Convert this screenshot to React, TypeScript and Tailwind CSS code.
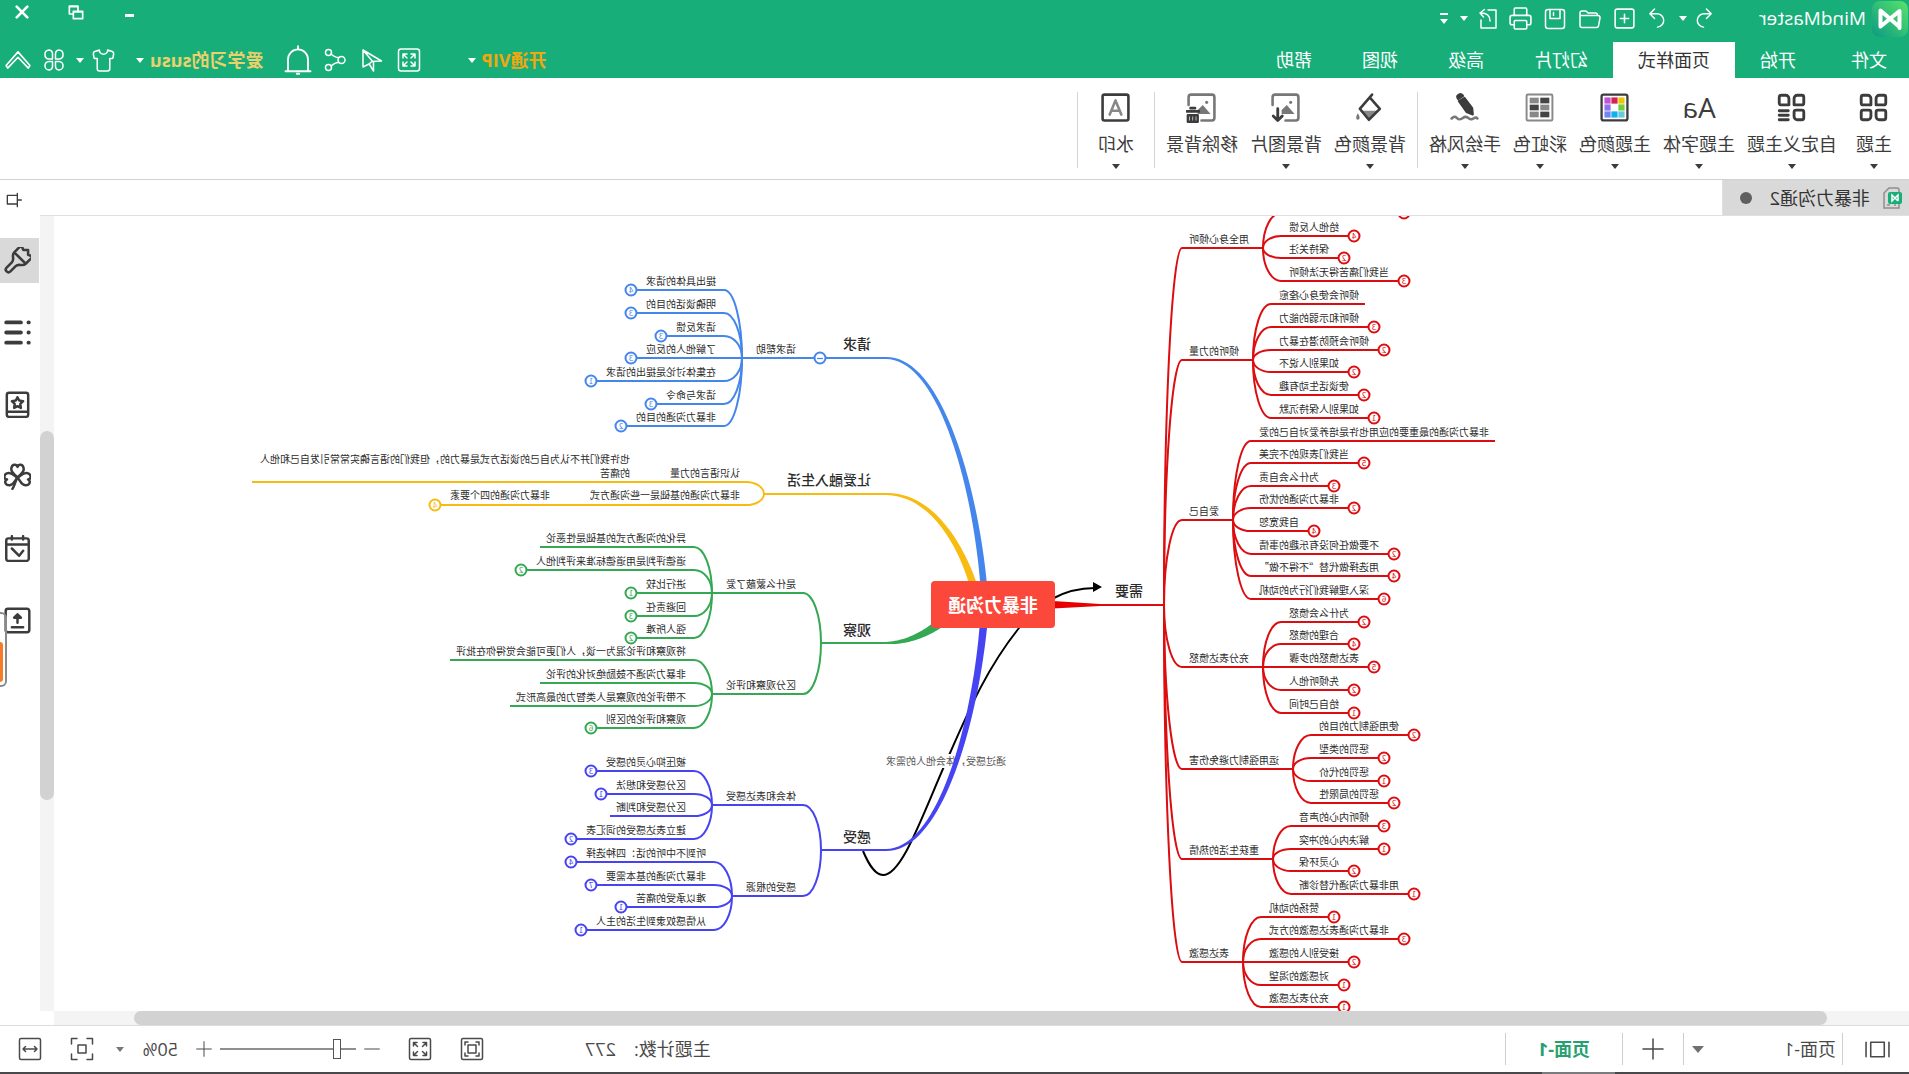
import React from 'react';
import { Printer, Shirt } from 'lucide-react';

type Leaf = [text: string, y: number, badge?: number | string];

interface Topic {
  text: string;
  y: number;
  leaves: Leaf[];
}

const RED = '#dc0d10';
const BLUE = '#4486ec';
const YELLOW = '#f7bb12';
const GREEN = '#35a853';
const PURPLE = '#4644f2';

const needTopics: Topic[] = [
  {
    text: '用全身心倾听',
    y: 248,
    leaves: [
      // scrolled out above the canvas, only its curve and marker reach in
      ['　　　　　　　　　　', 213, ' '],
      ['给他人反馈', 236, 4],
      ['保持关注', 258, 2],
      ['当我们痛苦得无法倾听', 281, 3],
    ],
  },
  {
    text: '倾听的力量',
    y: 360,
    leaves: [
      ['倾听会使身心痊愈', 304],
      ['倾听和示弱的能力', 327, 3],
      ['倾听会预防潜在暴力', 350, 2],
      ['如果别人说不', 372, 2],
      ['使谈话生动有趣', 395, 2],
      ['如果别人保持沉默', 418, 1],
    ],
  },
  {
    text: '爱自己',
    y: 520,
    leaves: [
      ['非暴力沟通的最重要的应用也许是培养爱对自己的爱', 441],
      ['当我们表现的不完美', 463, 5],
      ['为什么会自责', 486, 3],
      ['非暴力沟通的忧伤', 508, 2],
      ['自我宽恕', 531, 4],
      ['不要做任何没有乐趣的事情', 554, 2],
      ['用选择做代替“不得不做”', 576, 4],
      ['深入理解我们行为的动机', 599, 6],
    ],
  },
  {
    text: '充分表达愤怒',
    y: 667,
    leaves: [
      ['为什么会愤怒', 622, 2],
      ['合理的愤怒', 644, 4],
      ['表达愤怒的步骤', 667, 5],
      ['先倾听他人', 690, 2],
      ['给自己时间', 713, 1],
    ],
  },
  {
    text: '运用强制力避免伤害',
    y: 769,
    leaves: [
      ['使用强制力的目的', 735, 2],
      ['惩罚的类型', 758, 2],
      ['惩罚的代价', 781, 1],
      ['惩罚的局限性', 803, 2],
    ],
  },
  {
    text: '重获生活的热情',
    y: 859,
    leaves: [
      ['倾听内心的声音', 826, 3],
      ['解决内心的冲突', 849, 1],
      ['心灵环保', 871, 2],
      ['用非暴力沟通代替诊断', 894, 1],
    ],
  },
  {
    text: '表达感激',
    y: 962,
    leaves: [
      ['赞扬的动机', 917, 1],
      ['非暴力沟通表达感激的方式', 939, 3],
      ['接受别人的感激', 962, 2],
      ['对感激的渴望', 985, 1],
      ['充分表达感激', 1007, 1],
    ],
  },
];

const requestTopics: Topic[] = [
  {
    text: '请求帮助',
    y: 358,
    leaves: [
      ['提出具体的请求', 290, 4],
      ['明确谈话的目的', 313, 3],
      ['请求反馈', 336, 3],
      ['了解他人的反应', 358, 3],
      ['在集体讨论是提出的请求', 381, 1],
      ['请求与命令', 404, 3],
      ['非暴力沟通的目的', 426, 2],
    ],
  },
];

const observeTopics: Topic[] = [
  {
    text: '是什么蒙蔽了爱',
    y: 593,
    leaves: [
      ['异化的沟通方式的基础是性恶论', 547],
      ['道德评判是用道德标准来评判他人', 570, 2],
      ['进行比较', 593, 1],
      ['回避责任', 616, 3],
      ['强人所难', 638, 2],
    ],
  },
  {
    text: '区分观察和评论',
    y: 694,
    leaves: [
      ['将观察和评论混为一谈，人们更可能会觉得你在批评', 660],
      ['非暴力沟通不鼓励绝对化的评论', 683],
      ['不带评论的观察是人类智力的最高形式', 706],
      ['观察和评论的区别', 728, 6],
    ],
  },
];

const feelingTopics: Topic[] = [
  {
    text: '体会和表达感受',
    y: 805,
    leaves: [
      ['被压抑心灵的感受', 771, 3],
      ['区分感受和想法', 794, 1],
      ['区分感受和判断', 816],
      ['建立表达感受的词汇表', 839, 2],
    ],
  },
  {
    text: '感受的根源',
    y: 896,
    leaves: [
      ['听到不中听的话：四种选择', 862, 4],
      ['非暴力沟通的基本需要', 885, 7],
      ['难以承受的痛苦', 907, 1],
      ['从情感奴隶到生活的主人', 930, 1],
    ],
  },
];

// quarter ellipse from the parent joint to the start of the child's line
const bend = (x: number, y: number, dir: number, toY: number) => {
  if (toY === y) return `M${x} ${y}h${18 * dir}`;
  const sweep = (toY > y) === (dir > 0) ? 0 : 1;
  return `M${x} ${y}A18 ${Math.abs(toY - y)} 0 0 ${sweep} ${x + 18 * dir} ${toY}`;
};

// cubic curve whose stroke gets thinner towards its end
const taper = (p: number[], from: number, to: number) => {
  const left: string[] = [];
  const right: string[] = [];
  for (let i = 0; i <= 40; i++) {
    const t = i / 40;
    const m = 1 - t;
    const at = (k: number) =>
      m * m * m * p[k] + 3 * m * m * t * p[k + 2] + 3 * m * t * t * p[k + 4] + t * t * t * p[k + 6];
    const slope = (k: number) =>
      m * m * (p[k + 2] - p[k]) + 2 * m * t * (p[k + 4] - p[k + 2]) + t * t * (p[k + 6] - p[k + 4]);
    const dx = slope(0);
    const dy = slope(1);
    const len = Math.hypot(dx, dy) || 1;
    const w = (from + (to - from) * t) / 2;
    left.push(`${at(0) - (dy / len) * w} ${at(1) + (dx / len) * w}`);
    right.unshift(`${at(0) + (dy / len) * w} ${at(1) - (dx / len) * w}`);
  }
  return `M${left.concat(right).join('L')}Z`;
};

const Badge: React.FC<{ x: number; y: number; color: string; value: React.ReactNode }> = ({ x, y, color, value }) => (
  <g>
    <circle cx={x} cy={y} r={5.5} fill="#fff" stroke={color} strokeWidth={2} />
    <text x={x} y={y + 3} textAnchor="middle" fontSize={8} fill={color}>
      {value}
    </text>
  </g>
);

interface BranchProps {
  x: number;
  y: number;
  dir: 1 | -1;
  color: string;
  topics: Topic[];
}

const Branch: React.FC<BranchProps> = ({ x, y, dir, color, topics }) => {
  const anchor = dir > 0 ? 'start' : 'end';
  return (
    <>
      {topics.map((topic) => {
        const joint = x + dir * (25 + topic.text.length * 10 + 14);
        return (
          <g key={topic.text}>
            <path
              d={`${bend(x, y, dir, topic.y)}H${joint}`}
              fill="none"
              stroke={color}
              strokeWidth={2}
            />
            <text x={x + dir * 25} y={topic.y - 5} textAnchor={anchor}>
              {topic.text}
            </text>
            {topic.leaves.map(([text, leafY, badge]) => {
              const end = joint + dir * (26 + text.length * 10);
              return (
                <g key={leafY}>
                  <path
                    d={`${bend(joint, topic.y, dir, leafY)}H${end + dir * (badge ? 9 : 6)}`}
                    fill="none"
                    stroke={color}
                    strokeWidth={2}
                  />
                  <text x={joint + dir * 26} y={leafY - 5} textAnchor={anchor}>
                    {text.trim()}
                  </text>
                  {badge && <Badge x={end + dir * 15} y={leafY} color={color} value={badge} />}
                </g>
              );
            })}
          </g>
        );
      })}
    </>
  );
};

const MindMap = () => (
  <svg
    className="absolute inset-0 h-full w-full font-['Noto_Sans_CJK_SC',sans-serif]"
    fontSize={10}
    fill="#2b2b2b"
  >
    <g transform="translate(0 -216)">
      <Branch x={745} y={605} dir={-1} color={RED} topics={needTopics} />
      <path d="M745 605H812" stroke={RED} strokeWidth={2} />
      <path d="M809 604L856 601V608.5L809 606Z" fill="#e60000" />

      <path
        d="M1046 851C1040 865 1034 875 1026 875C1006 875 985 810 959 753C940 710 922 668 890 628C872 604 846 588 814 588"
        fill="none"
        stroke="#000"
        strokeWidth={2}
      />
      <path d="M807 587L816 582V592Z" fill="#000" />
      <rect x={903} y={754} width={120} height={14} fill="#fff" />
      <text x={903} y={765} fill="#555">
        通过感受，体会他人的需求
      </text>

      <path d={taper([924, 604, 929, 508, 964, 358, 1023, 358], 7, 2)} fill={BLUE} />
      <path d={taper([931, 604, 937, 570, 967, 494, 1023, 494], 8.5, 2)} fill={YELLOW} />
      <path d={taper([949, 604, 964, 622, 991, 643, 1023, 643], 13, 2)} fill={GREEN} />
      <path d={taper([924, 604, 929, 700, 964, 850, 1023, 850], 8, 2)} fill={PURPLE} />

      <path d="M1022 358H1090" stroke={BLUE} strokeWidth={2} />
      <Branch x={1088} y={358} dir={1} color={BLUE} topics={requestTopics} />
      <circle cx={1089} cy={358} r={5.5} fill="#fff" stroke={BLUE} strokeWidth={2} />
      <path d="M1086 358.5h6" stroke={BLUE} strokeWidth={1.2} />

      <g fill="none" stroke={YELLOW} strokeWidth={2}>
        <path d="M1022 494H1145" />
        <path d={`${bend(1145, 494, 1, 482)}H1657`} />
        <path d={`${bend(1145, 494, 1, 505)}H1469`} />
      </g>
      <text x={1169} y={477}>认识语言的力量</text>
      <text x={1279} y={463}>也许我们并不认为自己的谈话方式是暴力的，但我们的语言确实常常引发自己和他人</text>
      <text x={1279} y={477}>的痛苦</text>
      <text x={1169} y={499}>非暴力沟通的基础是一些沟通方式</text>
      <text x={1359} y={499}>非暴力沟通的四个要素</text>
      <Badge x={1474} y={505} color={YELLOW} value={4} />

      <path d="M1022 643H1089" stroke={GREEN} strokeWidth={2} />
      <Branch x={1088} y={643} dir={1} color={GREEN} topics={observeTopics} />

      <path d="M1022 850H1089" stroke={PURPLE} strokeWidth={2} />
      <Branch x={1088} y={850} dir={1} color={PURPLE} topics={feelingTopics} />

      <g fontSize={14} fontWeight={500}>
        <text x={766} y={596}>需要</text>
        <text x={1038} y={349}>请求</text>
        <text x={1038} y={485}>让爱融入生活</text>
        <text x={1038} y={635}>观察</text>
        <text x={1038} y={842}>感受</text>
      </g>

      <rect x={854} y={581} width={124} height={47} rx={4} fill="#fb483b" />
      <text x={916} y={612} textAnchor="middle" fontSize={18} fontWeight={700} fill="#fff">
        非暴力沟通
      </text>
    </g>
  </svg>
);

interface IconProps {
  size?: number;
  stroke?: number;
  children: React.ReactNode;
}

const Icon: React.FC<IconProps> = ({ size = 24, stroke = 1.5, children }) => (
  <svg
    width={size}
    height={size}
    viewBox="0 0 24 24"
    fill="none"
    stroke="currentColor"
    strokeWidth={stroke}
    strokeLinecap="round"
    strokeLinejoin="round"
    className="shrink-0"
    aria-hidden="true"
  >
    {children}
  </svg>
);

const Caret = () => (
  <svg width={8} height={5} viewBox="0 0 8 5" fill="currentColor" className="shrink-0" aria-hidden="true">
    <path d="M0 0h8L4 5z" />
  </svg>
);

const MLogo: React.FC<{ size: number }> = ({ size }) => (
  <svg width={size} height={size} viewBox="0 0 36 36" className="shrink-0" aria-hidden="true">
    <defs>
      <linearGradient id="logo" x1="0" y1="0" x2="1" y2="1">
        <stop offset="0" stopColor="#58e36a" />
        <stop offset="1" stopColor="#0b9a83" />
      </linearGradient>
    </defs>
    <rect width={36} height={36} rx={8} fill="url(#logo)" />
    <path
      d="M8.5 27V10l19 15.5V9.5L8.5 26"
      fill="none"
      stroke="#fff"
      strokeWidth={4}
      strokeLinejoin="round"
      strokeLinecap="round"
    />
  </svg>
);

const quickActions = [
  {
    label: '重做',
    width: 'w-[30px]',
    icon: <Icon size={23}><path d="M14 2l5 5-5 5M19 7h-7a6.5 6.5 0 0 0-1 14" /></Icon>,
  },
  {
    label: '新建',
    width: 'w-[34px]',
    icon: <Icon size={25}><rect x="3" y="3" width="18" height="18" rx="2" /><path d="M12 8v8M8 12h8" /></Icon>,
  },
  {
    label: '打开',
    width: 'w-[35px]',
    icon: <Icon size={24}><path d="M2 9v9.500A2 2 0 0 0 4 20.500h14.500a2 2 0 0 0 2-1.600L22 11a2 2 0 0 0-2-2.500H2V6a2 2 0 0 1 2-2h4l2 2h7.500a2 2 0 0 1 2 2.500" transform="translate(24 0) scale(-1 1)" /></Icon>,
  },
  {
    label: '保存',
    width: 'w-[35px]',
    icon: <Icon size={24}><rect x="2.5" y="2.5" width="19" height="19" rx="2.5" /><path d="M7 3v8.500h10V3M13.500 5.500v3" /></Icon>,
  },
  { label: '打印', width: 'w-[34px]', icon: <Printer size={25} strokeWidth={1.5} /> },
  {
    label: '导出',
    width: 'w-[32px]',
    icon: <Icon size={24}><path d="M12 3H4v18h15v-8M10 14c0-5 3-8 9-8M15.500 2.500L20 6l-3.500 4" /></Icon>,
  },
];

const menus = ['开始', '页面样式', '幻灯片', '高级', '视图', '帮助'];

const accountActions = [
  {
    label: '全屏',
    icon: <Icon><rect x="1.5" y="1" width="21" height="22" rx="2.5" /><path d="M6 10V6h4M14 6h4v4M18 14v4h-4M10 18H6v-4M6.500 6.500l3.500 3.500M17.500 6.500L14 10M17.500 17.500L14 14M6.500 17.500L10 14" /></Icon>,
  },
  {
    label: '发送',
    icon: <Icon><path d="M21 2v17l-6-3-3-2.500L2.500 13zM21 2L10.500 14.500V23l4-6.500" /></Icon>,
  },
  {
    label: '分享',
    icon: <Icon><circle cx="5.5" cy="12" r="3.5" /><circle cx="18.500" cy="4.5" r="3" /><circle cx="18.500" cy="19.5" r="3" /><path d="M8 9.500c3 .5 5-1 8-3.500M8 14.500c3-.5 5 1 8 3.500" /></Icon>,
  },
  {
    label: '通知',
    icon: <Icon size={30}><path d="M4 21V11.500a8 8 0 0 1 16 0V21M2 21h20M12 1v2M11 23h2" /></Icon>,
  },
];

const fourTiles = 'M4 2.500h3.500a2.500 2.500 0 0 1 2.500 2.500v5H4a1.500 1.500 0 0 1-1.500-1.500V4A1.500 1.500 0 0 1 4 2.500zM16.500 2.500H20A1.500 1.500 0 0 1 21.500 4v4.500A1.500 1.500 0 0 1 20 10h-6V5a2.500 2.500 0 0 1 2.500-2.500zM4 14h4.500A1.500 1.500 0 0 1 10 15.500V19a2.500 2.500 0 0 1-2.500 2.500H4A1.500 1.500 0 0 1 2.500 20v-4.500A1.500 1.500 0 0 1 4 14z';

const picture = (
  <g stroke="none">
    <path d="M12 22H4a2 2 0 0 1-2-2V4a2 2 0 0 1 2-2h16a2 2 0 0 1 2 2v6" fill="none" stroke="#777" strokeWidth={2} />
    <path d="M5 17l6-7 4 4v3z" fill="#777" />
    <circle cx={8} cy={8} r={1.2} fill="#777" />
  </g>
);

const swatches = ['#f0c40c', '#d2264f', '#c152d9', '#73cd3c', '#ffffff', '#9272ea', '#66c9dd', '#12b1f0', '#7383f8'];
const greys = ['#444', '#888', '#888', '#444', '#444', '#888'];

interface Tool {
  label: string;
  caret?: boolean;
  icon: React.ReactNode;
}

const toolGroups: Tool[][] = [
  [
    {
      label: '自定义主题',
      caret: true,
      icon: <Icon size={31} stroke={2.2}><path d={fourTiles} /><path d="M14.500 14.500h7M14.500 18h7M14.500 21.500h7" /></Icon>,
    },
    {
      label: '主题字体',
      caret: true,
      icon: <span className="text-[28px] leading-[30px] font-medium">Aa</span>,
    },
    {
      label: '主题颜色',
      caret: true,
      icon: (
        <Icon size={31} stroke={1.8}>
          <rect x="2" y="2" width="20" height="20" rx="1.5" />
          {swatches.map((color, i) => (
            <rect key={color} x={4.2 + (i % 3) * 5.4} y={4.2 + Math.floor(i / 3) * 5.4} width={4.8} height={4.8} fill={color} stroke="none" />
          ))}
        </Icon>
      ),
    },
    {
      label: '彩虹色',
      caret: true,
      icon: (
        <Icon size={31}>
          <rect x="2" y="2" width="20" height="20" rx="1" stroke="#888" />
          {greys.map((color, i) => (
            <rect key={i} x={4.4 + (i % 2) * 8.2} y={4.4 + Math.floor(i / 2) * 5.4} width={7} height={4.4} fill={color} stroke="none" />
          ))}
        </Icon>
      ),
    },
    {
      label: '手绘风格',
      caret: true,
      icon: (
        <Icon size={31}>
          <g fill="currentColor" transform="translate(24 0) scale(-1 1)">
            <path d="M7.500 7l4.500-2.500 6 8 .5 5-5-2z" />
            <path d="M6.500 4.500c-1-2 2.500-4 4-2l.5.5-4 2.500z" />
          </g>
          <path d="M2 20.500c2-2.500 3 1.500 5.500.5s3-3 5.500-1 3.500 1.500 5 0 2.500-1 4 .5" stroke="#777" strokeWidth="2" />
        </Icon>
      ),
    },
  ],
  [
    {
      label: '背景颜色',
      caret: true,
      icon: (
        <Icon size={31} stroke={2}>
          <path d="M5.500 14.500h14L12.500 21z" fill="#888" stroke="none" />
          <path d="M10 2l9.500 11L12.500 21.500 4 13l7.500-8.500" />
          <path d="M21 16.500c2 3 1.500 5 0 5s-2-2 0-5z" fill="#777" stroke="none" />
        </Icon>
      ),
    },
    {
      label: '背景图片',
      caret: true,
      icon: <Icon size={31} stroke={2.2}>{picture}<path d="M18 13v9M14.500 18.500L18 22l3.500-3.500" /></Icon>,
    },
    {
      label: '移除背景',
      icon: <Icon size={31} stroke={2}>{picture}<path d="M14 15h9.500M17 12.500h3.500M15 18h7.500v5H15zM17.500 18v4M20 18v4" /></Icon>,
    },
  ],
  [
    {
      label: '水印',
      caret: true,
      icon: <Icon size={31} stroke={2}><rect x="2" y="2" width="20" height="20" rx="1.5" /><path d="M7.500 17.500L12 6.500l4.500 11M9.500 14.500h5" stroke="#888" strokeWidth="2" /></Icon>,
    },
  ],
];

const groupPadding = ['pr-[11px]', 'px-[11px]', 'px-5'];

const panels = [
  {
    label: '样式',
    icon: (
      <g transform="translate(11.5 11.5) rotate(-45) scale(1.2)" strokeWidth={1.9}>
        <path d="M-6-2v-7.500l3.500 1.500L0-10.500l2.500 2.500L6-9.500V-2zM-6-2c0 3.500 4 3 4 6.500V10a2 2 0 0 0 4 0V4.500C2 1 6 1.500 6-2" />
      </g>
    ),
  },
  {
    label: '大纲',
    icon: <path d="M9 3h13M9 12h13M9 21h13M2 3h.2M2 12h.2M2 21h.2" strokeWidth="3.5" />,
  },
  {
    label: '图标',
    icon: (
      <>
        <rect x="2.5" y="1.5" width="19" height="21.5" rx="2" />
        <path d="M3 18.500h18" />
        <path d="M12 5.500l1.500 3 3.500.5-2.500 2.500.5 3.500-3-1.500-3 1.500.5-3.500L7 9l3.500-.5z" />
      </>
    ),
  },
  {
    label: '剪贴画',
    icon: (
      <g transform="translate(12 13)">
        {['rotate(0)', 'rotate(100)', 'rotate(-100)'].map((turn) => (
          <path key={turn} transform={turn} d="M0 0C-2-3-6-4-5.500-8-5-12-1-12.500 0-9.500 1-12.500 5-12 5.500-8 6-4 2-3 0 0" />
        ))}
        <path d="M0 0c2 3 2 6 4.500 10" />
      </g>
    ),
  },
  {
    label: '任务',
    icon: <path d="M4 3h16a2 2 0 0 1 2 2v16a2 2 0 0 1-2 2H4a2 2 0 0 1-2-2V5a2 2 0 0 1 2-2zM2 8.500h20M7 1v3M17 1v3M7 14l3.500 4.500L17 12" />,
  },
  {
    label: '导出',
    icon: <path d="M3.500 1.500h17a2 2 0 0 1 2 2v17a2 2 0 0 1-2 2h-17a2 2 0 0 1-2-2v-17a2 2 0 0 1 2-2zM7 18h10M12 14V7.500M9 9.500l3-3 3 3z" />,
  },
];

const TitleBar = () => (
  <div className="flex h-[42px] items-start justify-between">
    <div className="flex h-[37px] items-center">
      <div className="flex w-[193px] items-center gap-1.5 pl-px text-[19px]">
        <MLogo size={36} />
        MindMaster
      </div>
      <button aria-label="撤销" className="flex w-[22px] justify-center">
        <Icon size={23}><path d="M10 2L5 7l5 5M5 7h7a6.500 6.500 0 0 1 1 14" /></Icon>
      </button>
      <button aria-label="撤销历史" className="flex w-[22px] justify-center"><Caret /></button>
      {quickActions.map(({ label, width, icon }) => (
        <button key={label} aria-label={label} className={`flex justify-center ${width}`}>
          {icon}
        </button>
      ))}
      <button aria-label="导出选项" className="flex w-4 justify-center"><Caret /></button>
      <button aria-label="自定义工具栏" className="flex w-6 flex-col items-center gap-1">
        <span className="h-0.5 w-2 bg-white" />
        <Caret />
      </button>
    </div>
    <div className="flex h-6 items-center">
      <button aria-label="最小化" className="flex h-6 w-11 items-center justify-center pt-1.5">
        <span className="h-[3px] w-[9px] bg-white" />
      </button>
      <button aria-label="还原" className="flex w-16 justify-center">
        <Icon size={16} stroke={2.5}><path d="M15 10V3H2v12h5M2 4h13M8 11h14v11H8zM8 12h14" transform="translate(24 0) scale(-1 1)" /></Icon>
      </button>
      <button aria-label="关闭" className="flex w-11 justify-center">
        <Icon size={16} stroke={4}><path d="M4 4l16 16M20 4L4 20" /></Icon>
      </button>
    </div>
  </div>
);

const MenuBar = () => (
  <nav className="flex h-9 items-stretch justify-between">
    <div className="flex text-lg">
      <button className="pl-[22px] pr-[30px]">文件</button>
      {menus.map((menu) => (
        <button
          key={menu}
          className={menu === '页面样式' ? 'bg-white px-[25px] text-[#333]' : 'px-[25px]'}
        >
          {menu}
        </button>
      ))}
    </div>
    <div className="flex items-center text-lg font-bold">
      <button className="mr-10 flex items-center gap-1.5">
        <span className="text-[#f2a70d]">开通VIP</span>
        <Caret />
      </button>
      {accountActions.map(({ label, icon }) => (
        <button key={label} aria-label={label} className="flex w-[37px] justify-center">
          {icon}
        </button>
      ))}
      <button className="ml-4 flex items-center gap-1.5">
        <span className="text-[#ead16b]">爱学习的susu</span>
        <Caret />
      </button>
      <button aria-label="皮肤" className="ml-4 flex w-8 justify-center"><Shirt size={25} strokeWidth={1.5} /></button>
      <button aria-label="皮肤选项" className="flex w-4 justify-center"><Caret /></button>
      <button aria-label="应用" className="flex w-9 justify-center">
        <Icon size={24}>
          <path d="M7 2a4 4 0 0 0-4 4.500A4 4 0 0 0 7 11h3.500V6A4 4 0 0 0 7 2zM17 2a4 4 0 0 0-3.500 4v5H17a4 4 0 0 0 4-4.500A4 4 0 0 0 17 2zM7 13.500a4 4 0 0 0-4 4.500 4 4 0 0 0 4 4 4 4 0 0 0 3.500-4v-4.500zM13.500 13.500V18a4 4 0 0 0 3.500 4 4 4 0 0 0 4-4 4 4 0 0 0-4-4.500z" />
        </Icon>
      </button>
      <button aria-label="收起功能区" className="flex w-9 justify-center">
        <Icon size={26}><path d="M1 17L12 4.500 23 17l-1.500 2.500L12 9.500 2.500 19.500z" /></Icon>
      </button>
    </div>
  </nav>
);

const ToolButton: React.FC<{ tool: Tool }> = ({ tool }) => (
  <button className="flex h-full flex-col items-center">
    <span className="flex h-[30px] items-center">{tool.icon}</span>
    <span className="mt-2.5 text-lg leading-6">{tool.label}</span>
    {tool.caret && <span className="mt-2"><Caret /></span>}
  </button>
);

const Ribbon = () => (
  <div className="flex h-[102px] items-start border-b border-[#d0d3d3] bg-white pl-[17px] pt-3.5 text-[#3c3c3c]">
    <div className="mr-[19px] h-[76px]">
      <ToolButton
        tool={{
          label: '主题',
          caret: true,
          icon: <Icon size={31} stroke={2.2}><path d={fourTiles} /><path d="M15.500 14H20a1.500 1.500 0 0 1 1.500 1.500V20a1.500 1.500 0 0 1-1.500 1.500h-3.500A2.500 2.500 0 0 1 14 19v-3.500a1.500 1.500 0 0 1 1.500-1.500z" /></Icon>,
        }}
      />
    </div>
    {toolGroups.map((group, i) => (
      <div key={i} className={`flex h-[76px] gap-3 border-r border-[#d5d5d5] ${groupPadding[i]}`}>
        {group.map((tool) => (
          <ToolButton key={tool.label} tool={tool} />
        ))}
      </div>
    ))}
  </div>
);

const Sidebar = () => (
  <aside className="relative flex w-10 shrink-0 flex-col text-[#3c3c3c]">
    <button aria-label="固定面板" className="flex h-[39px] items-center justify-center pl-3">
      <Icon size={16} stroke={2}><path d="M1 12h6M7 2v20M7 5h15v12M7 18h15v-2" /></Icon>
    </button>
    <div className="mt-[19px] flex flex-col gap-[27px]">
      {panels.map(({ label, icon }, i) => (
        <button
          key={label}
          aria-label={label}
          className={`ml-px flex h-[45px] items-center justify-center pl-1 ${i === 0 ? 'bg-[#d9d9d9]' : ''}`}
        >
          <Icon size={27} stroke={2.2}>{icon}</Icon>
        </button>
      ))}
    </div>
    <div className="absolute right-0 top-[432px] h-[75px] w-[7px] rounded-l-md border-2 border-r-0 border-[#8a8a8a] pt-7">
      <div className="ml-0.5 h-10 rounded-l-sm bg-[#f87c28]" />
    </div>
  </aside>
);

const Workspace = () => (
  <div className="flex min-w-0 flex-1 flex-col">
    <div className="flex h-9 border-b border-[#e0e0e0]">
      <button className="flex w-[187px] items-center border-r border-[#e0e0e0] bg-[#d9d9d9] pl-[7px] text-lg text-[#333]">
        <svg width={20} height={22} viewBox="0 0 20 22" fill="none" aria-hidden="true">
          <path d="M5 1h8l5 5v15H3V3a2 2 0 0 1 2-2zM6 18h2M12 18h3" stroke="#8e8e8e" strokeWidth={1.5} />
          <rect x={0} y={5} width={14} height={12} rx={2} fill="#17ae79" />
          <path d="M4 14V8l6 6V8l-6 6" stroke="#fff" strokeWidth={1.5} />
        </svg>
        <span className="ml-3">非暴力沟通2</span>
        <span className="ml-[18px] size-3 rounded-full bg-[#5f5f5f]" />
      </button>
    </div>
    <div className="flex min-h-0 flex-1">
      <div className="flex min-w-0 flex-1 flex-col">
        <main className="relative flex-1 overflow-hidden">
          <MindMap />
        </main>
        <div className="h-3.5 bg-[#f4f4f4] pl-[4.4%]">
          <div className="h-3.5 w-[95.5%] rounded-full bg-[#d2d2d2]" />
        </div>
      </div>
      <div className="mb-3.5 flex w-3.5 flex-col bg-[#f4f4f4]">
        <div className="h-[27%]" />
        <div className="h-[46.5%] rounded-full bg-[#d2d2d2]" />
      </div>
    </div>
  </div>
);

const StatusBar = () => (
  <footer className="flex h-[47px] items-center border-t border-[#dcdcdc] text-lg text-[#4a4a4a]">
    <button aria-label="页面列表" className="flex w-[66px] justify-center pr-1">
      <Icon size={25}><path d="M1 5v14M23 5v14M5.500 5h13v14h-13z" /></Icon>
    </button>
    <div className="relative flex h-8 w-[160px] items-center border-x border-[#cfcfcf]">
      <select aria-label="页面" className="w-full appearance-none bg-transparent pl-1.5 outline-none">
        <option>页面-1</option>
      </select>
      <svg width={12} height={7} viewBox="0 0 12 7" fill="#707070" className="pointer-events-none absolute right-2" aria-hidden="true">
        <path d="M0 0h12L6 7z" />
      </svg>
    </div>
    <button aria-label="添加页面" className="flex w-[60px] justify-center">
      <Icon size={24}><path d="M12 2v20M2 12h20" /></Icon>
    </button>
    <button className="h-8 w-[118px] border-x border-[#cfcfcf] font-bold text-[#27a070]">页面-1</button>
    <div className="ml-auto mr-[87px] flex gap-[18px]">
      <span>主题计数:</span>
      <span>277</span>
    </div>
    <button aria-label="适应页面" className="flex w-[52px] justify-center">
      <Icon><rect x="1.5" y="1.5" width="21" height="21" rx="1.5" /><path d="M8 8h8v8H8zM5 8V5h3M16 5h3v3M19 16v3h-3M8 19H5v-3" /></Icon>
    </button>
    <button aria-label="全屏显示" className="flex w-[52px] justify-center">
      <Icon><rect x="1.5" y="1.5" width="21" height="21" rx="1.5" /><path d="M5.500 9V5.500H9M15 5.500h3.500V9M18.500 15v3.500H15M9 18.500H5.500V15M6 6l3.500 3.500M18 6l-3.500 3.500M18 18l-3.500-3.500M6 18l3.500-3.500" /></Icon>
    </button>
    <button aria-label="缩小" className="ml-1.5 flex w-8 justify-center">
      <Icon size={16}><path d="M1 12h22" /></Icon>
    </button>
    <input
      type="range"
      aria-label="缩放"
      defaultValue={12}
      className="h-5 w-[136px] appearance-none bg-transparent [&::-webkit-slider-runnable-track]:h-[2px] [&::-webkit-slider-runnable-track]:bg-[#8f8f8f] [&::-webkit-slider-thumb]:-mt-[9px] [&::-webkit-slider-thumb]:h-5 [&::-webkit-slider-thumb]:w-2 [&::-webkit-slider-thumb]:appearance-none [&::-webkit-slider-thumb]:border [&::-webkit-slider-thumb]:border-[#555] [&::-webkit-slider-thumb]:bg-white"
    />
    <button aria-label="放大" className="flex w-8 justify-center">
      <Icon size={16}><path d="M1 12h22M12 1v22" /></Icon>
    </button>
    <div className="relative ml-2.5 flex w-[62px] items-center">
      <select aria-label="缩放比例" className="w-full appearance-none bg-transparent outline-none">
        <option>50%</option>
      </select>
      <span className="pointer-events-none absolute right-0 flex items-center text-[#777]"><Caret /></span>
    </div>
    <button aria-label="聚焦中心" className="ml-2 flex w-[52px] justify-center">
      <Icon><path d="M8 8h8v8H8zM1.500 7V1.500H7M17 1.500h5.500V7M22.500 17v5.500H17M7 22.500H1.500V17" /></Icon>
    </button>
    <button aria-label="适应宽度" className="mr-1 flex w-[52px] justify-center">
      <Icon><rect x="1.5" y="1.5" width="21" height="21" rx="1.5" /><path d="M5.500 12h13M7.500 9.500L5 12l2.500 2.500M16.500 9.500L19 12l-2.500 2.500" /></Icon>
    </button>
  </footer>
);

const App: React.FC = () => {
  return (
    <div className="flex h-screen -scale-x-100 flex-col overflow-hidden bg-white font-['Open_Sans','Noto_Sans_CJK_SC',sans-serif]">
      <header className="bg-[#17ae79] text-white">
        <TitleBar />
        <MenuBar />
      </header>
      <Ribbon />
      <div className="flex min-h-0 flex-1">
        <Workspace />
        <Sidebar />
      </div>
      <StatusBar />
      <div className="h-0.5 bg-[#48484a] pl-[294px]">
        <div className="h-0.5 w-[73px] bg-[#7b7b7d]" />
      </div>
    </div>
  );
};

export default App;
